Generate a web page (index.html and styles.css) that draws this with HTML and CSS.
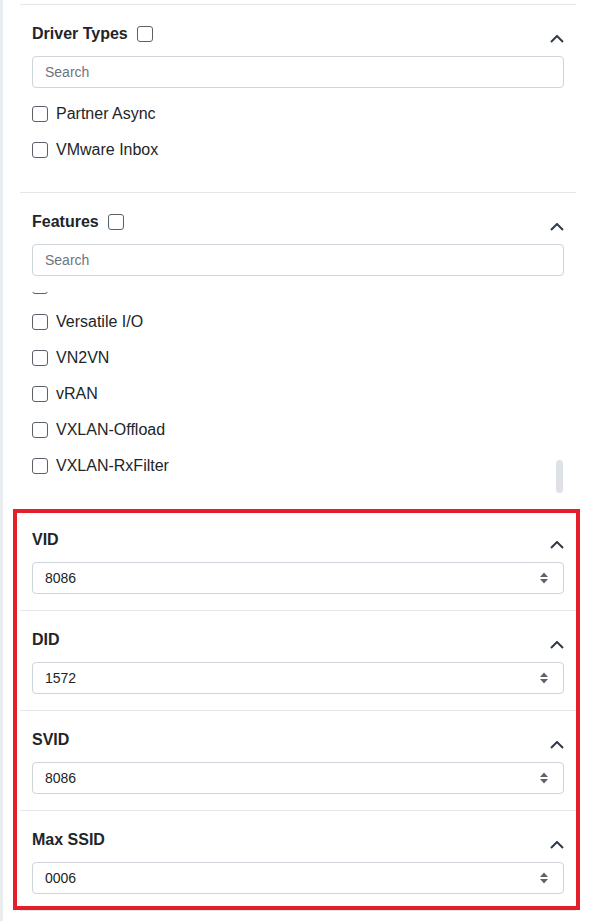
FILE: index.html
```html
<!DOCTYPE html>
<html lang="en">
<head>
    <meta charset="UTF-8">
    <meta name="viewport" content="width=device-width, initial-scale=1.0">
    <title>Filters</title>
    <link rel="stylesheet" href="styles.css">
</head>
<body>
    <div class="rail"></div>

    <aside class="panel">
        <!-- Driver types -->
        <section class="filter">
            <div class="filter-head">
                <div class="filter-title">
                    <h3>Driver Types</h3>
                    <input type="checkbox" class="check">
                </div>
                <svg class="chevron" width="14" height="8" viewBox="0 0 14 8"><polyline points="1,7 7,1 13,7"/></svg>
            </div>
            <input type="text" class="search" placeholder="Search">
            <ul class="options">
                <li><label><input type="checkbox" class="check"> Partner Async</label></li>
                <li><label><input type="checkbox" class="check"> VMware Inbox</label></li>
            </ul>
        </section>

        <!-- Features -->
        <section class="filter">
            <div class="filter-head">
                <div class="filter-title">
                    <h3>Features</h3>
                    <input type="checkbox" class="check">
                </div>
                <svg class="chevron" width="14" height="8" viewBox="0 0 14 8"><polyline points="1,7 7,1 13,7"/></svg>
            </div>
            <input type="text" class="search" placeholder="Search">
            <div class="scroll-box">
                <div class="scroll-list">
                    <ul class="options">
                        <li><label><input type="checkbox" class="check"> CNA</label></li>
                        <li><label><input type="checkbox" class="check"> DCB</label></li>
                        <li><label><input type="checkbox" class="check"> DPU</label></li>
                        <li><label><input type="checkbox" class="check"> Dynamic NetQueue</label></li>
                        <li><label><input type="checkbox" class="check"> ENS</label></li>
                        <li><label><input type="checkbox" class="check"> ENS Interrupt</label></li>
                        <li><label><input type="checkbox" class="check"> ENS Polling</label></li>
                        <li><label><input type="checkbox" class="check"> FCoE</label></li>
                        <li><label><input type="checkbox" class="check"> Geneve-Offload</label></li>
                        <li><label><input type="checkbox" class="check"> Geneve-RxFilter</label></li>
                        <li><label><input type="checkbox" class="check"> Hardware iSCSI</label></li>
                        <li><label><input type="checkbox" class="check"> iSER</label></li>
                        <li><label><input type="checkbox" class="check"> iWARP</label></li>
                        <li><label><input type="checkbox" class="check"> LRO</label></li>
                        <li><label><input type="checkbox" class="check"> Multi-Queue</label></li>
                        <li><label><input type="checkbox" class="check"> NetQueue</label></li>
                        <li><label><input type="checkbox" class="check"> NPAR</label></li>
                        <li><label><input type="checkbox" class="check"> NVMe-oF</label></li>
                        <li><label><input type="checkbox" class="check"> NVMe/RDMA</label></li>
                        <li><label><input type="checkbox" class="check"> NVMe/TCP</label></li>
                        <li><label><input type="checkbox" class="check"> PTP</label></li>
                        <li><label><input type="checkbox" class="check"> RDMA</label></li>
                        <li><label><input type="checkbox" class="check"> RoCE v1</label></li>
                        <li><label><input type="checkbox" class="check"> RoCE v2</label></li>
                        <li><label><input type="checkbox" class="check"> RSS</label></li>
                        <li><label><input type="checkbox" class="check"> SR-IOV</label></li>
                        <li><label><input type="checkbox" class="check"> TSO</label></li>
                        <li><label><input type="checkbox" class="check"> Uniform Passthrough</label></li>
                        <li><label><input type="checkbox" class="check"> VMDirectPath</label></li>
                        <li><label><input type="checkbox" class="check"> Versatile I/O</label></li>
                        <li><label><input type="checkbox" class="check"> VN2VN</label></li>
                        <li><label><input type="checkbox" class="check"> vRAN</label></li>
                        <li><label><input type="checkbox" class="check"> VXLAN-Offload</label></li>
                        <li><label><input type="checkbox" class="check"> VXLAN-RxFilter</label></li>
                    </ul>
                </div>
                <div class="scroll-thumb"></div>
            </div>
        </section>

        <!-- ID fields (highlighted) -->
        <div class="highlight">
            <section class="filter">
                <div class="filter-head">
                    <h3>VID</h3>
                    <svg class="chevron" width="14" height="8" viewBox="0 0 14 8"><polyline points="1,7 7,1 13,7"/></svg>
                </div>
                <div class="num-field">
                    <input type="text" inputmode="numeric" value="8086">
                    <svg class="spin" width="8" height="12" viewBox="0 0 8 12"><polygon points="0,5 4,0.5 8,5"/><polygon points="0,7 4,11.5 8,7"/></svg>
                </div>
            </section>

            <section class="filter">
                <div class="filter-head">
                    <h3>DID</h3>
                    <svg class="chevron" width="14" height="8" viewBox="0 0 14 8"><polyline points="1,7 7,1 13,7"/></svg>
                </div>
                <div class="num-field">
                    <input type="text" inputmode="numeric" value="1572">
                    <svg class="spin" width="8" height="12" viewBox="0 0 8 12"><polygon points="0,5 4,0.5 8,5"/><polygon points="0,7 4,11.5 8,7"/></svg>
                </div>
            </section>

            <section class="filter">
                <div class="filter-head">
                    <h3>SVID</h3>
                    <svg class="chevron" width="14" height="8" viewBox="0 0 14 8"><polyline points="1,7 7,1 13,7"/></svg>
                </div>
                <div class="num-field">
                    <input type="text" inputmode="numeric" value="8086">
                    <svg class="spin" width="8" height="12" viewBox="0 0 8 12"><polygon points="0,5 4,0.5 8,5"/><polygon points="0,7 4,11.5 8,7"/></svg>
                </div>
            </section>

            <section class="filter">
                <div class="filter-head">
                    <h3>Max SSID</h3>
                    <svg class="chevron" width="14" height="8" viewBox="0 0 14 8"><polyline points="1,7 7,1 13,7"/></svg>
                </div>
                <div class="num-field">
                    <input type="text" inputmode="numeric" value="0006">
                    <svg class="spin" width="8" height="12" viewBox="0 0 8 12"><polygon points="0,5 4,0.5 8,5"/><polygon points="0,7 4,11.5 8,7"/></svg>
                </div>
            </section>
        </div>
    </aside>
</body>
</html>
```

FILE: styles.css
```css
/* Page */
body {
    font-family: "Liberation Sans", Arial, sans-serif;
    color: #212529;
    background: #fff;
    margin: 0;
    padding: 0;
    display: flex;
    min-height: 100vh;
}

.rail {
    width: 3px;
    flex-shrink: 0;
    background: #e9ecef;
}

/* Filter panel */
.panel {
    width: 556px;
    margin-left: 17px;
    padding-top: 4px;
}

.filter {
    border-top: 1px solid #e3e6ea;
    padding: 17px 12px 16px;
}

.filter-head {
    display: flex;
    justify-content: space-between;
    align-items: center;
    height: 24px;
    margin-bottom: 10px;
}

.filter-title {
    display: flex;
    align-items: center;
    gap: 9px;
}

.filter-head h3 {
    margin: 0;
    font-size: 16px;
    font-weight: bold;
    line-height: 24px;
}

.chevron {
    margin-top: 10px;
    fill: none;
    stroke: #2f3b47;
    stroke-width: 2;
}

/* Checkbox */
.check {
    appearance: none;
    -webkit-appearance: none;
    width: 16px;
    height: 16px;
    margin: 0;
    border: 1px solid #5c6169;
    border-radius: 3px;
    background: #fff;
    flex-shrink: 0;
}

/* Search */
.search {
    display: block;
    width: 100%;
    height: 32px;
    box-sizing: border-box;
    padding: 0 12px;
    font-family: inherit;
    font-size: 14px;
    color: #212529;
    border: 1px solid #ced4da;
    border-radius: 4px;
    outline: none;
}

.search::placeholder {
    color: #6c757d;
}

/* Option lists */
.options {
    list-style: none;
    margin: 8px 0;
    padding: 0;
}

.options li {
    height: 36px;
    display: flex;
    align-items: center;
}

.options label {
    display: flex;
    align-items: center;
    gap: 8px;
    font-size: 16px;
}

/* Scrollable list, anchored at the bottom */
.scroll-box {
    position: relative;
    margin-top: 16px;
}

.scroll-list {
    height: 202px;
    overflow-y: auto;
    scrollbar-width: none;
    display: flex;
    flex-direction: column-reverse;
}

.scroll-list .options {
    margin: 0;
    padding-bottom: 10px;
}

.scroll-thumb {
    position: absolute;
    right: 1px;
    bottom: 1px;
    width: 7px;
    height: 33px;
    border-radius: 4px;
    background: #dee2e6;
}

/* Number fields */
.num-field {
    display: flex;
    align-items: center;
    height: 32px;
    box-sizing: border-box;
    border: 1px solid #ced4da;
    border-radius: 4px;
}

.num-field input {
    flex: 1;
    min-width: 0;
    border: none;
    outline: none;
    background: transparent;
    padding: 0 12px;
    font-family: inherit;
    font-size: 14px;
    color: #212529;
}

.spin {
    margin-right: 15px;
    fill: #5d6470;
}

/* Highlight frame */
.highlight {
    position: relative;
}

.highlight .filter:last-child {
    border-bottom: 1px solid #e3e6ea;
}

.highlight::after {
    content: "";
    position: absolute;
    top: -1px;
    bottom: 1px;
    left: -7px;
    right: -4px;
    border: 4px solid #e51f27;
    pointer-events: none;
}
```
